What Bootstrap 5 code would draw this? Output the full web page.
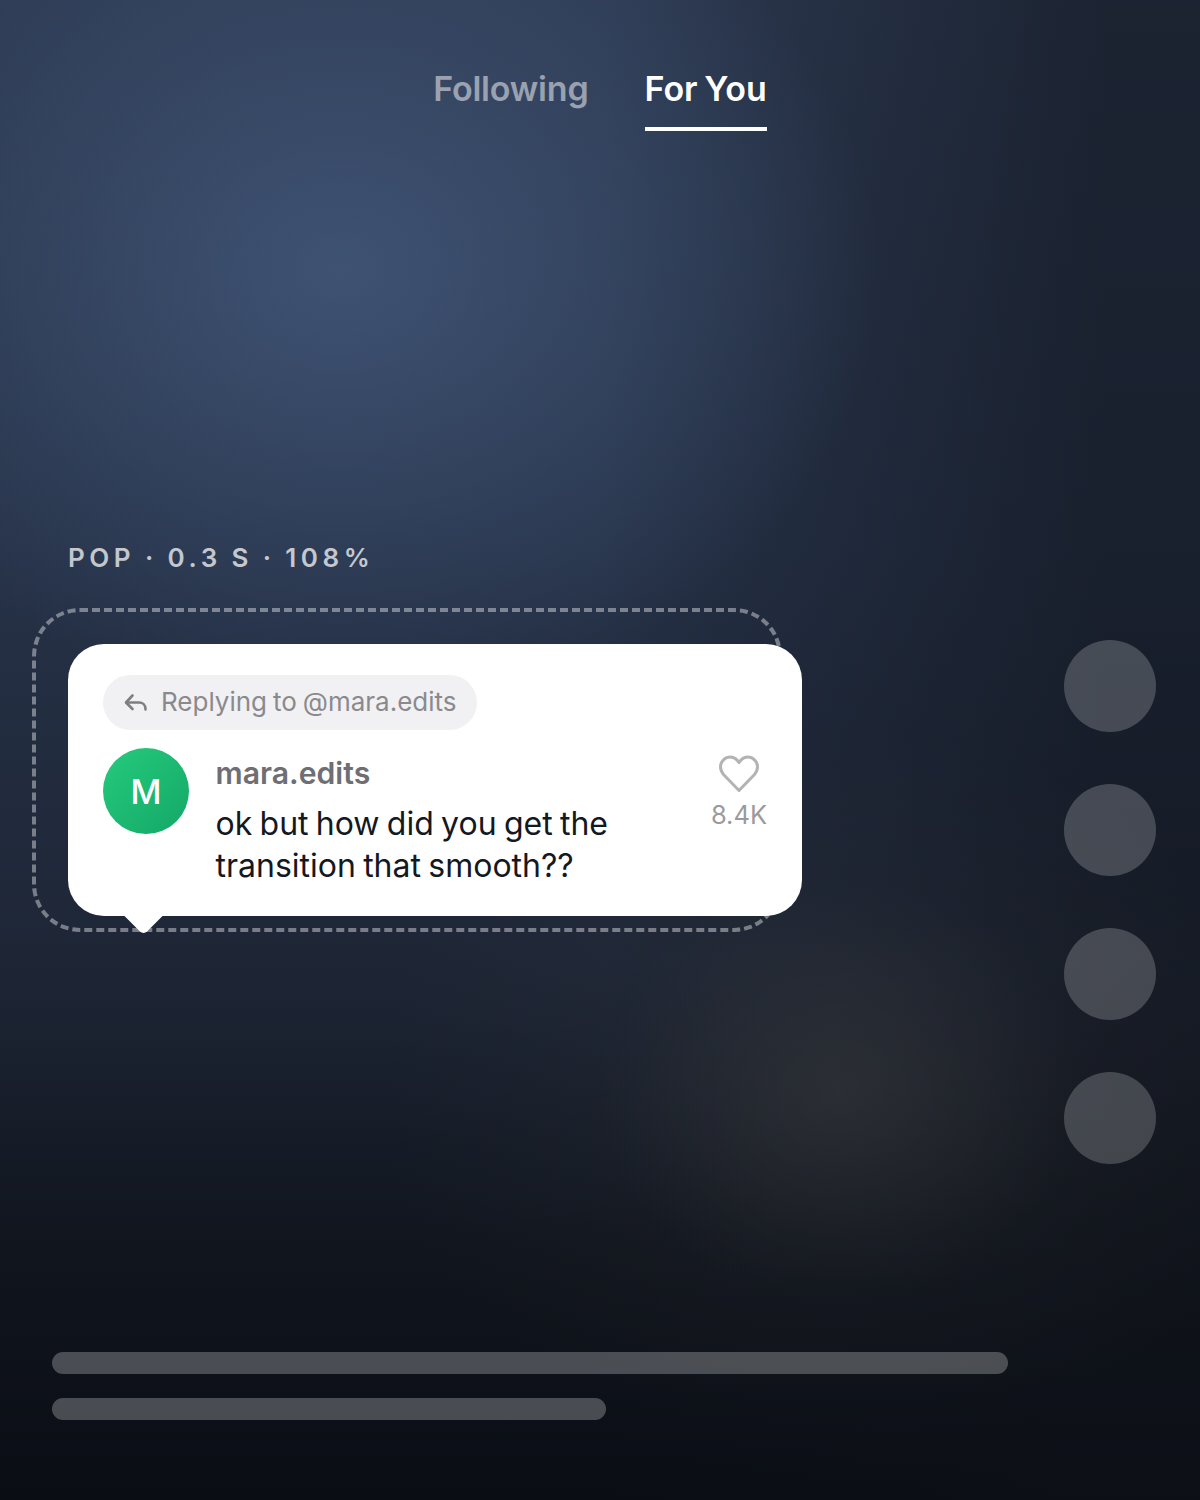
<!DOCTYPE html>
<html lang="en">
<head>
<meta charset="utf-8">
<title>Comment sticker</title>
<link href="https://cdn.jsdelivr.net/npm/bootstrap@5.3.0/dist/css/bootstrap.min.css" rel="stylesheet">
<style>
html,body{height:100%}
body{margin:0;width:1200px;height:1500px;overflow:hidden;font-family:Inter,"Liberation Sans",sans-serif;
background:
 radial-gradient(ellipse 240px 210px at 840px 1090px,rgba(72,72,72,.3),rgba(72,72,72,0) 100%),
 radial-gradient(ellipse 460px 360px at 840px 1090px,rgba(70,70,70,.18),rgba(70,70,70,0) 100%),
 radial-gradient(ellipse 540px 440px at 340px 270px,rgba(70,92,128,.74),rgba(60,80,112,0) 100%),
 linear-gradient(90deg,rgba(14,17,24,0) 50%,rgba(14,17,24,.55) 92%,rgba(14,17,24,.55) 100%),
 linear-gradient(180deg,#2d3a52 0%,#263248 36%,#1e2636 64%,#11161f 82%,#0a0d14 100%);}
.stage{height:1500px}
.tabs-row{padding-top:65px;gap:56px;height:540px}
.tab-item,.spec-line,.reply-pill,.comment-text{word-spacing:-.053em}
.tab-item{font-size:34px;font-weight:600;line-height:48px;height:66px;color:rgba(255,255,255,.5);letter-spacing:-.2px}
.tab-item.on{color:#fff;border-bottom:4px solid #fff;letter-spacing:0}
.spec-line{margin:0 0 0 68px;height:36px;font-size:26px;line-height:36px;font-weight:600;letter-spacing:.175em;color:rgba(255,255,255,.72)}
.mid-row{margin-top:64px;padding:0 44px 0 68px;height:712px}
.bubble-wrap{margin-top:4px;width:734px;height:272px}
.safe-frame{left:-36px;top:-36px;width:750px;height:324px;border:4px dashed rgba(255,255,255,.4);border-radius:48px}
.bubble{width:734px;height:272px;background:#fff;border-radius:36px;padding:31px 35px 0}
.bubble-tail{left:61px;bottom:-13px;width:29px;height:29px;background:#fff;transform:rotate(45deg);border-bottom-right-radius:5px}
.reply-pill{height:55px;padding:0 20px 2px 21px;background:#f1f1f3;border-radius:28px;font-size:26px;color:#8a8a8e;gap:13px}
.avatar-dot{width:86px;height:86px;flex:none;background:linear-gradient(135deg,#25cb7d,#14a767);color:#fff;font-size:34px;font-weight:500}
.comment-row{margin-top:18px;gap:26.5px}
.author-name{font-size:30.2px;font-weight:600;color:#6e6e73;line-height:50px}
.comment-text{font-size:32px;line-height:42px;color:#14181f;margin:5px 0 0}
.like-col{width:56px;flex:none;margin-top:7px;font-size:25.5px;color:#9a9a9e;line-height:30px;gap:7px}
.rail{gap:52px;width:92px}
.rail-dot{width:92px;height:92px;background:rgba(255,255,255,.2)}
.lines{padding-left:52px;gap:24px}
.line-bar{height:22px;background:rgba(255,255,255,.25);border-radius:11px}
.w-long{width:956px}.w-short{width:554px}
</style>
</head>
<body>
<div class="stage d-flex flex-column">
  <div class="tabs-row d-flex justify-content-center align-items-start">
    <div class="tab-item">Following</div>
    <div class="tab-item on">For You</div>
  </div>
  <p class="spec-line">POP · 0.3 S · 108%</p>
  <div class="mid-row d-flex justify-content-between align-items-start">
    <div class="bubble-wrap position-relative">
      <div class="safe-frame position-absolute"></div>
      <div class="bubble-tail position-absolute"></div>
      <div class="bubble position-relative">
        <div class="reply-pill d-inline-flex align-items-center">
          <svg width="24" height="18" viewBox="0 0 24 18" fill="none" stroke="#7f7f83" stroke-width="2.600" stroke-linecap="round" stroke-linejoin="round"><path d="M8.500 2.500 2 9.500 8.500 16"/><path d="M2.500 9.500H15c3.500 0 6.500 2.500 6.500 6.500v.5"/></svg>
          <span>Replying to @mara.edits</span>
        </div>
        <div class="comment-row d-flex align-items-start">
          <div class="avatar-dot rounded-circle d-flex align-items-center justify-content-center">M</div>
          <div class="flex-grow-1">
            <div class="author-name">mara.edits</div>
            <p class="comment-text">ok but how did you get the<br>transition that smooth??</p>
          </div>
          <div class="like-col d-flex flex-column align-items-center">
            <svg width="40" height="38" viewBox="0 0 40 38" fill="none" stroke="#b3b3b5" stroke-width="3" stroke-linejoin="round"><path d="M20 35.500 4.500 19.500C.5 15 .5 8.500 4.500 4.800 8.500 1 14.500 1 18 5l2 2.500L22 5c3.500-4 9.500-4 13.500-.2 4 3.700 4 10.200 0 14.700z"/></svg>
            <span>8.4K</span>
          </div>
        </div>
      </div>
    </div>
    <div class="rail d-flex flex-column">
      <div class="rail-dot rounded-circle"></div>
      <div class="rail-dot rounded-circle"></div>
      <div class="rail-dot rounded-circle"></div>
      <div class="rail-dot rounded-circle"></div>
    </div>
  </div>
  <div class="lines d-flex flex-column">
    <div class="line-bar w-long"></div>
    <div class="line-bar w-short"></div>
  </div>
</div>
<script src="https://cdn.jsdelivr.net/npm/bootstrap@5.3.0/dist/js/bootstrap.bundle.min.js"></script>
</body>
</html>
